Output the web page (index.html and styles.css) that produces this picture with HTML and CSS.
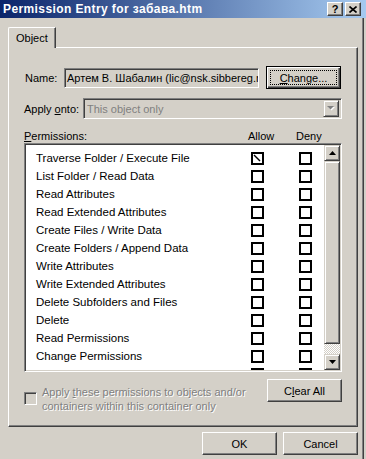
FILE: index.html
```html
<!DOCTYPE html>
<html>
  <head>
    <title>Permission Entry for забава.htm</title>
    <link rel="stylesheet" href="styles.css">
  </head>
  <body>
    <div class="window">
      <div class="titlebar">
        <span class="title">Permission Entry for забава.htm</span>
        <div class="caption-buttons">
          <span class="cap-btn help">?</span>
          <span class="cap-btn">
            <svg width="8" height="7" viewBox="0 0 8 7"><path d="M0.5 0.5 L7.5 6.5 M7.5 0.5 L0.5 6.5" stroke="#000" stroke-width="1.6" fill="none"/></svg>
          </span>
        </div>
      </div>

      <div class="client">
        <div class="tabs">
          <div class="tab">Object</div>
        </div>

        <div class="tab-page">
          <div class="row name-row">
            <span class="lbl name-lbl">Name:</span>
            <div class="edit">Артем В. Шабалин (lic@nsk.sibbereg.ru)</div>
            <div class="btn default change-btn"><span class="focus"><u>C</u>hange...</span></div>
          </div>

          <div class="row apply-row">
            <span class="lbl apply-lbl">Apply <u>o</u>nto:</span>
            <div class="combo">
              <span class="combo-text">This object only</span>
              <span class="combo-drop">
                <svg width="8" height="5" viewBox="0 0 8 5"><path d="M1 1 H8 L4.5 4.5 Z" fill="#fff"/><path d="M0 0 H7 L3.5 3.5 Z" fill="#808080"/></svg>
              </span>
            </div>
          </div>

          <div class="perm-head">
            <span class="perm-lbl"><u>P</u>ermissions:</span>
            <span class="col-allow">Allow</span>
            <span class="col-deny">Deny</span>
          </div>

          <div class="listbox">
            <div class="rows">
              <div class="perm-row">
                <span>Traverse Folder / Execute File</span>
                <span class="cb marked">
                  <svg width="11" height="9" viewBox="0 0 11 9"><path d="M1 1 L7 7" stroke="#000" stroke-width="1.4"/><rect x="9" y="3" width="2" height="2" fill="#000"/></svg>
                </span>
                <span class="cb"></span>
              </div>
              <div class="perm-row"><span>List Folder / Read Data</span><span class="cb"></span><span class="cb"></span></div>
              <div class="perm-row"><span>Read Attributes</span><span class="cb"></span><span class="cb"></span></div>
              <div class="perm-row"><span>Read Extended Attributes</span><span class="cb"></span><span class="cb"></span></div>
              <div class="perm-row"><span>Create Files / Write Data</span><span class="cb"></span><span class="cb"></span></div>
              <div class="perm-row"><span>Create Folders / Append Data</span><span class="cb"></span><span class="cb"></span></div>
              <div class="perm-row"><span>Write Attributes</span><span class="cb"></span><span class="cb"></span></div>
              <div class="perm-row"><span>Write Extended Attributes</span><span class="cb"></span><span class="cb"></span></div>
              <div class="perm-row"><span>Delete Subfolders and Files</span><span class="cb"></span><span class="cb"></span></div>
              <div class="perm-row"><span>Delete</span><span class="cb"></span><span class="cb"></span></div>
              <div class="perm-row"><span>Read Permissions</span><span class="cb"></span><span class="cb"></span></div>
              <div class="perm-row"><span>Change Permissions</span><span class="cb"></span><span class="cb"></span></div>
              <div class="perm-row"><span>Take Ownership</span><span class="cb"></span><span class="cb"></span></div>
            </div>
            <div class="scrollbar">
              <span class="sb-btn">
                <svg width="7" height="4" viewBox="0 0 7 4"><path d="M3.5 0 L7 4 H0 Z" fill="#000"/></svg>
              </span>
              <span class="sb-thumb"></span>
              <span class="sb-track"></span>
              <span class="sb-btn">
                <svg width="7" height="4" viewBox="0 0 7 4"><path d="M0 0 H7 L3.5 4 Z" fill="#000"/></svg>
              </span>
            </div>
          </div>

          <div class="row bottom-row">
            <div class="inherit">
              <span class="check disabled"></span>
              <span class="inherit-text">Apply <u>t</u>hese permissions to objects and/or<br>containers within this container only</span>
            </div>
            <div class="btn">C<u>l</u>ear All</div>
          </div>
        </div>

        <div class="dialog-buttons">
          <div class="btn">OK</div>
          <div class="btn">Cancel</div>
        </div>
      </div>
    </div>
  </body>
</html>
```

FILE: styles.css
```css
body {
  margin: 0;
  background: #d4d0c8;
  font-family: "Liberation Sans", Arial, sans-serif;
  font-size: 11px;
  color: #000;
}

.window {
  width: 366px;
  height: 459px;
  overflow: hidden;
}

/* title bar */

.titlebar {
  height: 18px;
  display: flex;
  align-items: center;
  padding: 0 5px 0 3px;
  background: linear-gradient(to right, #0a246a, #a6caf0);
}

.title {
  flex: 1;
  color: #fff;
  font-weight: bold;
  font-size: 12px;
  letter-spacing: 0.4px;
}

.caption-buttons {
  display: flex;
  gap: 2px;
}

.cap-btn {
  width: 16px;
  height: 14px;
  box-sizing: border-box;
  display: flex;
  align-items: center;
  justify-content: center;
  background: #d4d0c8;
  border: 1px solid;
  border-color: #fff #404040 #404040 #fff;
  box-shadow: inset -1px -1px #808080;
}

.cap-btn.help {
  font-weight: bold;
  font-size: 11px;
  line-height: 12px;
}

/* client area */

.client {
  width: 364px;
  height: 441px;
  box-sizing: border-box;
  padding: 9px 0 0 8px;
  border-right: 1px solid #404040;
  box-shadow: inset -1px 0 #808080;
}

.tabs {
  display: flex;
}

.tab {
  position: relative;
  z-index: 1;
  height: 21px;
  box-sizing: border-box;
  margin-bottom: -1px;
  padding: 4px 7px 0 7px;
  background: #d4d0c8;
  border-top: 1px solid #fff;
  border-left: 1px solid #fff;
  border-right: 1px solid #404040;
  border-top-left-radius: 2px;
  box-shadow: inset -1px 0 #808080;
}

.tab-page {
  width: 350px;
  height: 380px;
  box-sizing: border-box;
  padding: 18px 0 0 15px;
  border: 1px solid;
  border-color: #fff #404040 #404040 #fff;
  box-shadow: inset -1px -1px #808080;
}

.row {
  display: flex;
  align-items: center;
  width: 318px;
}

.name-row {
  height: 23px;
}

.name-lbl {
  width: 40px;
  padding-left: 1px;
  box-sizing: border-box;
}

.edit {
  width: 195px;
  height: 20px;
  box-sizing: border-box;
  padding: 3px 0 0 2px;
  white-space: nowrap;
  overflow: hidden;
  border: 1px solid;
  border-color: #808080 #fff #fff #808080;
  box-shadow: inset 1px 1px #404040, inset -1px -1px #d4d0c8;
}

.btn {
  width: 75px;
  height: 23px;
  box-sizing: border-box;
  display: flex;
  align-items: center;
  justify-content: center;
  background: #d4d0c8;
  border: 1px solid;
  border-color: #fff #404040 #404040 #fff;
  box-shadow: inset -1px -1px #808080;
}

.btn.default {
  padding: 3px;
  border-color: #000;
  box-shadow: inset 1px 1px #fff, inset -1px -1px #404040, inset -2px -2px #808080;
}

.change-btn {
  margin-left: 7px;
}

.focus {
  flex: 1;
  align-self: stretch;
  display: flex;
  align-items: center;
  justify-content: center;
  border: 1px dotted #000;
}

.apply-row {
  margin-top: 9px;
  height: 21px;
}

.apply-lbl {
  width: 59px;
}

.combo {
  flex: 1;
  height: 21px;
  box-sizing: border-box;
  display: flex;
  align-items: center;
  border: 1px solid;
  border-color: #808080 #fff #fff #808080;
  box-shadow: inset 1px 1px #404040, inset -1px -1px #d4d0c8;
  padding: 2px 2px 2px 3px;
}

.combo-text {
  flex: 1;
  color: #808080;
}

.combo-drop {
  width: 16px;
  height: 17px;
  box-sizing: border-box;
  display: flex;
  align-items: center;
  justify-content: center;
  border: 1px solid;
  border-color: #d4d0c8 #404040 #404040 #d4d0c8;
  box-shadow: inset 1px 1px #fff, inset -1px -1px #808080;
}

.perm-head {
  display: flex;
  width: 318px;
  height: 14px;
  margin-top: 10px;
  align-items: center;
}

.perm-lbl {
  width: 224px;
}

.col-allow {
  width: 48px;
}

/* permission list */

.listbox {
  width: 318px;
  height: 229px;
  box-sizing: border-box;
  display: flex;
  background: #fff;
  border: 1px solid;
  border-color: #808080 #fff #fff #808080;
  box-shadow: inset 1px 1px #404040, inset -1px -1px #d4d0c8;
  padding: 1px;
}

.rows {
  flex: 1;
  overflow: hidden;
  padding: 4px 12px 0 10px;
  font-size: 11.5px;
}

.perm-row {
  display: grid;
  grid-template-columns: 1fr 13px 13px;
  column-gap: 35px;
  align-items: center;
  height: 18px;
}

.cb {
  width: 13px;
  height: 13px;
  box-sizing: border-box;
  border: 2px solid #000;
  background: #fff;
}

.cb.marked svg {
  display: block;
  margin: 0 -2px 0 0;
}

.scrollbar {
  width: 16px;
  display: flex;
  flex-direction: column;
}

.sb-btn,
.sb-thumb {
  box-sizing: border-box;
  background: #d4d0c8;
  border: 1px solid;
  border-color: #d4d0c8 #404040 #404040 #d4d0c8;
  box-shadow: inset 1px 1px #fff, inset -1px -1px #808080;
}

.sb-btn {
  height: 16px;
  display: flex;
  align-items: center;
  justify-content: center;
}

.sb-thumb {
  height: 183px;
}

.sb-track {
  flex: 1;
  background-image: repeating-conic-gradient(#fff 0 25%, #d4d0c8 0 50%);
  background-size: 2px 2px;
}

/* inherit checkbox + clear all */

.bottom-row {
  margin-top: 7px;
  align-items: flex-start;
}

.inherit {
  flex: 1;
  display: flex;
  align-items: flex-start;
  padding-top: 6px;
}

.check {
  width: 13px;
  height: 13px;
  flex: none;
  box-sizing: border-box;
  margin-top: 7px;
  border: 1px solid;
  border-color: #808080 #fff #fff #808080;
  box-shadow: inset 1px 1px #404040, inset -1px -1px #d4d0c8;
  background: #d4d0c8;
}

.inherit-text {
  margin-left: 5px;
  white-space: nowrap;
  line-height: 14px;
  color: #808080;
  text-shadow: 1px 1px 0 #fff;
}

.dialog-buttons {
  width: 350px;
  display: flex;
  justify-content: flex-end;
  gap: 6px;
  margin-top: 5px;
}
```
